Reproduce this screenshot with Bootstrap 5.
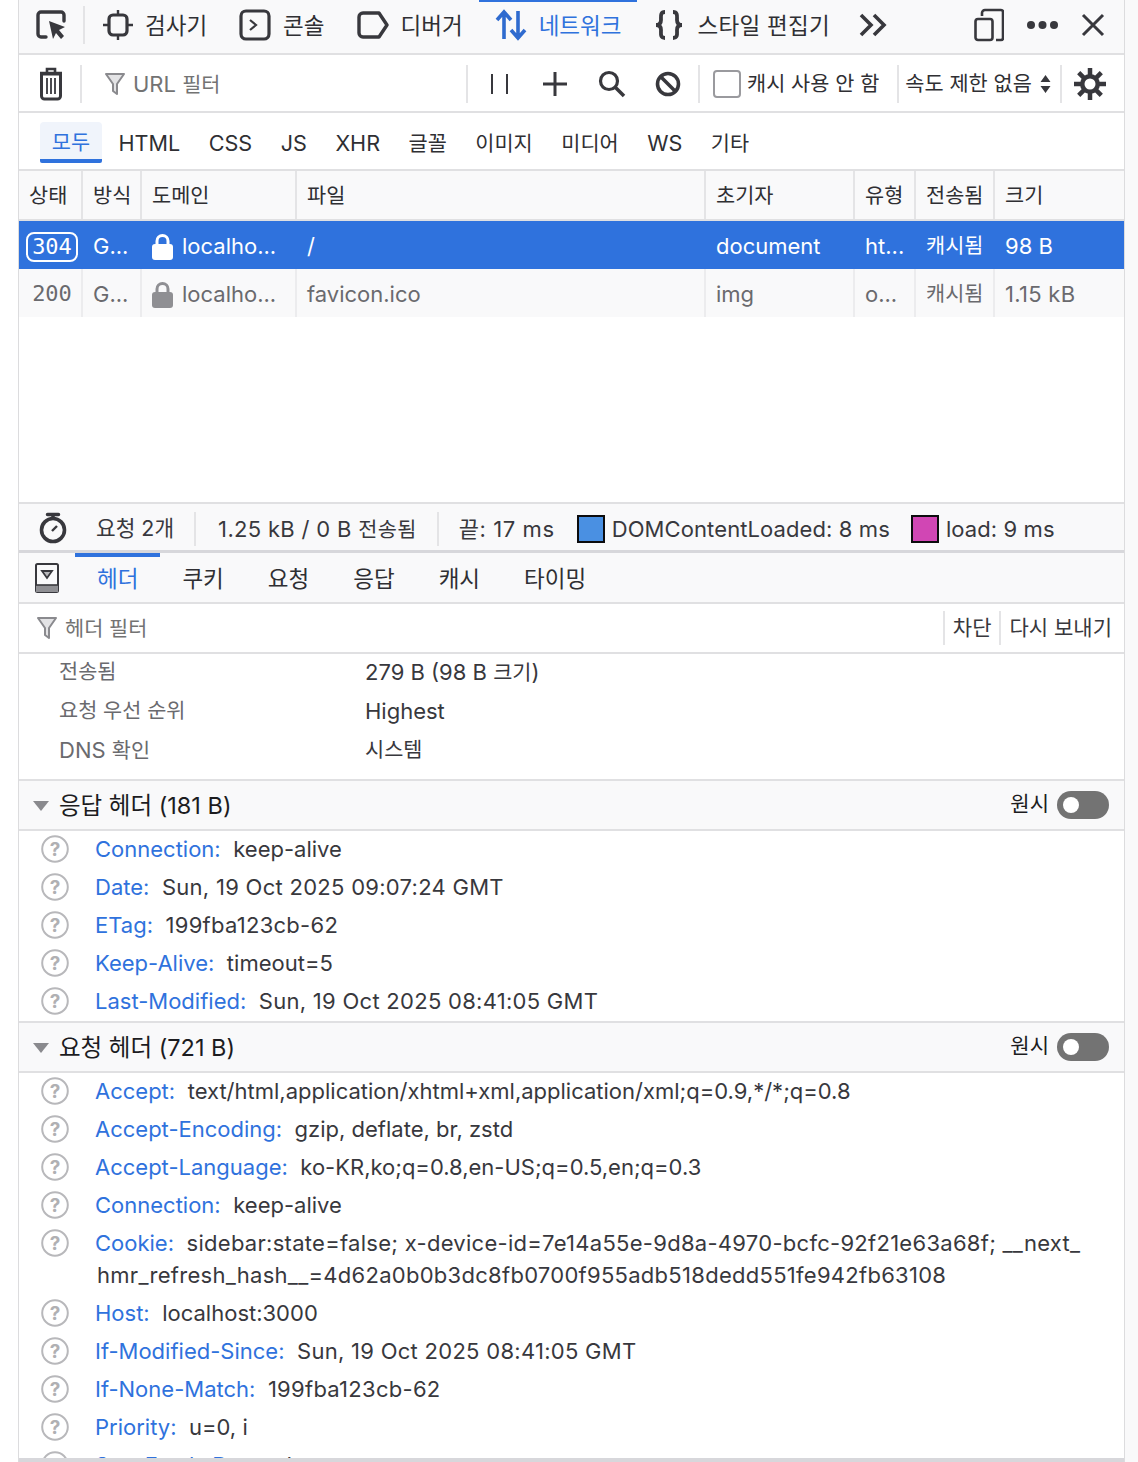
<!DOCTYPE html>
<html lang="ko">
<head>
<meta charset="utf-8">
<title>네트워크</title>
<link href="https://cdn.jsdelivr.net/npm/bootstrap@5.3.0/dist/css/bootstrap.min.css" rel="stylesheet">
<style>
html,body{margin:0;height:1462px;overflow:hidden;background:#f9f9fa}
body{font-family:Inter,"Noto Sans CJK KR","Noto Sans",sans-serif;font-size:22px;line-height:1.2;color:#38383d}
.ko{font-size:20.8px}
.num{letter-spacing:.28px}
.outer-left{position:absolute;left:0;top:0;width:18px;height:1462px;background:#fff}
.frame{position:relative;width:1107px;height:1462px;margin-left:18px;background:#fff;border-left:1px solid #dcdcde;border-right:1px solid #dcdcde;overflow:hidden;display:flex;flex-direction:column}
.bar{flex:none;border-bottom:2px solid #e0e0e2;display:flex;align-items:center}
.tb1{height:55px;background:#f9f9fa;padding-bottom:3px}
.tb2{height:58px;background:#fff;padding-top:2px}
.tb3{height:58px;background:#fff}
svg{display:block;flex:none}
.vsep{width:2px;height:38px;background:#e4e4e6;flex:none}
.pick{margin-left:16px;margin-right:16px}
.tb1 .vsep{margin-right:2px}
.dtab{display:flex;align-items:center;gap:12px;padding:0 16px 3px;height:53px;align-self:flex-start;color:#2f2f33;white-space:nowrap;font-size:22.5px}
.dtab.sel{color:#2f72dd;box-shadow:inset 0 2px 0 #2f72dd}
.wide-label{letter-spacing:.3px}
.more{margin-left:13px}
.tool-right{margin-left:auto;display:flex;align-items:center;gap:22px;margin-right:19px}
.trash{margin-left:19px;margin-right:16px}
.fltr{margin-left:23px;margin-right:8px}
.ph{color:#737373}
.url-fill{width:333px}
.tools{display:flex;align-items:center;margin-left:22px}
.t-plus{margin-left:34px}
.t-search{margin-left:31px}
.t-block{margin-left:29px}
.sep-a{margin-left:17px}
.chk{width:28px;height:28px;border:2px solid #9a9a9e;border-radius:4px;background:#fff;margin:0 6px 0 13px;flex:none}
.tx-sm{white-space:nowrap;color:#2f2f33}
.sep-b{margin-left:18px}
.tx-rate{margin-left:6px}
.arrows{margin-left:8px}
.sep-c{margin-left:9px}
.gear{margin-left:12px}
.ftabs{display:flex;gap:4.5px;margin-left:21px;height:100%;align-items:stretch}
.ftab{display:flex;align-items:center;padding:3px 12px 0;color:#2f2f33;margin-top:9px;height:41px;white-space:nowrap;font-size:21.6px}
.ftab.ko{font-size:20.8px}
.ftab.sel{background:#f0f4fb;color:#2f72dd;border-bottom:4px solid #2f72dd;border-radius:4px 4px 2px 2px;padding:6px 0 0;width:62px;justify-content:center}
.gridhead,.gridrow{display:grid;grid-template-columns:62px 59px 155px 409px 149px 61px 79px 1fr;flex:none}
.gridhead{height:50px;background:#f9f9fa;border-bottom:2px solid #e0e0e2}
.gridrow{height:48px;align-items:stretch}
.cel{display:flex;align-items:center;padding-left:10px;border-left:2px solid #ececee;white-space:nowrap;overflow:hidden;padding-top:3px}
.cel:first-child{border-left:0}
.gridhead .cel{border-left-color:#e4e4e6;color:#2f2f33;padding-top:2px}
.rsel{background:#2f72dd;color:#fff}
.rsel .cel{border-left-color:transparent}
.rdim{background:#f9f9fa;color:#6a6a6e}
.mono{font-family:"DejaVu Sans Mono",monospace;font-size:22px;padding-left:4px;justify-content:center}
.pill{border:2px solid #fff;border-radius:8px;padding:0 4px;line-height:26px;height:30px}
.gap-l{gap:9px}
.empty{height:185px;flex:none}
.status{height:48px;flex:none;background:#f9f9fa;border-top:2px solid #e0e0e2;display:flex;align-items:center;color:#38383d;padding-top:4px}
.status svg.watch{margin-left:19px;margin-right:28px}
.st-count{font-size:21.4px}
.st-xfer{letter-spacing:.32px;margin-left:2px}
.st-fin{letter-spacing:.6px}
.st-dom{letter-spacing:.1px}
.stsep{width:2px;height:34px;background:#e4e4e6;margin:0 20px;flex:none}
.swatch{width:28px;height:28px;border:2px solid #0c0c0d;flex:none;margin-right:7px}
.sw-b{background:#4a90e2;margin-left:22px}
.sw-p{background:#d146b4;margin-left:21px}
.split{height:3px;background:#d7d7db;flex:none}
.dtabs{height:51px;background:#f9f9fa;flex:none}
.dbook{margin-left:16px;margin-right:16px}
.htab{height:49px;padding:2px 22px 0;display:flex;align-items:center;justify-content:center;color:#2f2f33;font-size:22.5px}
.htab.sel{color:#2f72dd;box-shadow:inset 0 4px 0 #2f72dd}
.tb-h{height:50px;background:#fff;flex:none}
.hicon{margin-left:18px;margin-right:8px}
.ph-h{padding-top:2px}
.acts{margin-left:auto;display:flex;align-items:center;margin-right:12px;color:#38383d;font-size:21px}
.acts .vsep{height:34px;margin:0 8px}
.sum{height:127px;flex:none;border-bottom:2px solid #e0e0e2;color:#38383d}
.sumrow{display:flex;height:39px;align-items:center;padding-bottom:3px}
.sumk{width:306px;margin-left:40px;color:#6a6a6e}
.sec{height:50px;flex:none;background:#f9f9fa;border-bottom:2px solid #e0e0e2;display:flex;align-items:center;color:#1c1c1f;font-size:23.5px;padding-top:2px}
.sec.sec2{height:52px;border-top:2px solid #e0e0e2;padding-top:2px}
.tri{margin-left:14px;margin-right:10px}
.raw{margin-left:auto;display:flex;align-items:center;gap:8px;margin-right:15px;font-size:21px;padding-bottom:2px}
.raw span{padding-bottom:3px}
.switcher{width:52px;height:28px;border-radius:14px;background:#737373;display:flex;align-items:center;padding-left:6px}
.switcher i{display:block;width:16px;height:16px;border-radius:50%;background:#fff}
.hrow{min-height:38px;display:flex;align-items:flex-start;flex:none}
.hrow svg{margin:4px 26px 0 22px}
.hline{line-height:31px;padding-top:3px;white-space:nowrap;width:990px}
.hk{color:#2f72dd;margin-right:12.5px}
.hv{color:#38383d}
.hrow.wrapd{min-height:70px}
.wrapd .hline{line-height:32px;padding-top:2px}
.wrapd .hv2{margin-left:2px}
.base{position:absolute;left:0;right:0;bottom:0;height:4px;background:#d7d7db}
</style>
</head>
<body>
<div class="outer-left"></div>
<main class="frame">
  <!-- devtools tabs -->
  <div class="bar tb1">
    <svg class="pick" width="32" height="32" viewBox="0 0 32 32"><path d="M11 28H6a3 3 0 0 1-3-3V6a3 3 0 0 1 3-3h20a3 3 0 0 1 3 3v6" fill="none" stroke="#38383d" stroke-width="3.4" stroke-linecap="round"/><path d="M14 12l16 6-6 3 5 6-3 3-5-6-3 6z" fill="#38383d"/></svg>
    <div class="vsep"></div>
    <div class="dtab"><svg width="30" height="32" viewBox="0 0 30 32"><rect x="6" y="6" width="18" height="20" rx="4" fill="none" stroke="#38383d" stroke-width="3.2"/><path d="M15 1v5M15 26v5M0 16h6M24 16h6" stroke="#38383d" stroke-width="2.4"/></svg><span>검사기</span></div>
    <div class="dtab"><svg width="32" height="32" viewBox="0 0 32 32"><rect x="2" y="2" width="28" height="28" rx="5" fill="none" stroke="#38383d" stroke-width="3.2"/><path d="M11 11l6 5-6 5" fill="none" stroke="#38383d" stroke-width="2.2"/></svg><span>콘솔</span></div>
    <div class="dtab"><svg width="32" height="28" viewBox="0 0 32 28"><path d="M6 2h16l8 12-8 12H6a4 4 0 0 1-4-4V6a4 4 0 0 1 4-4z" fill="none" stroke="#38383d" stroke-width="3.4" stroke-linejoin="round"/></svg><span>디버거</span></div>
    <div class="dtab sel"><svg width="32" height="32" viewBox="0 0 32 32"><path d="M9 30V4M2 11l7-8 7 8M23 2v26M16 21l7 8 7-8" fill="none" stroke="#2f6bcf" stroke-width="3.6"/></svg><span>네트워크</span></div>
    <div class="dtab"><svg width="32" height="30" viewBox="0 0 32 30"><path d="M12 2C7 2 8 6 8 10c0 3-1 5-5 5 4 0 5 2 5 5 0 4-1 8 4 8M20 2c5 0 4 4 4 8 0 3 1 5 5 5-4 0-5 2-5 5 0 4 1 8-4 8" fill="none" stroke="#38383d" stroke-width="3.8"/></svg><span class="wide-label">스타일 편집기</span></div>
    <svg class="more" width="28" height="24" viewBox="0 0 28 24"><path d="M2 2l10 10L2 22M15 2l10 10-10 10" fill="none" stroke="#38383d" stroke-width="3.6"/></svg>
    <div class="tool-right">
      <svg width="30" height="34" viewBox="0 0 30 34"><path d="M8 8V5a3 3 0 0 1 3-3h16a2 2 0 0 1 2 2v26a2 2 0 0 1-2 2h-5" fill="none" stroke="#38383d" stroke-width="2.6"/><rect x="1.5" y="11" width="17" height="21" rx="2.5" fill="none" stroke="#38383d" stroke-width="2.6"/></svg>
      <svg width="33" height="10" viewBox="0 0 33 10"><circle cx="5" cy="5" r="4" fill="#38383d"/><circle cx="16.500" cy="5" r="4" fill="#38383d"/><circle cx="28" cy="5" r="4" fill="#38383d"/></svg>
      <svg width="24" height="24" viewBox="0 0 24 24"><path d="M2 2l20 20M22 2L2 22" stroke="#38383d" stroke-width="3"/></svg>
    </div>
  </div>
  <!-- network toolbar -->
  <div class="bar tb2">
    <svg class="trash" width="26" height="34" viewBox="0 0 26 34"><path d="M2 6h22M9 5V2h8v3" fill="none" stroke="#38383d" stroke-width="2.6"/><path d="M3.500 7h19v22a3 3 0 0 1-3 3h-13a3 3 0 0 1-3-3z" fill="none" stroke="#38383d" stroke-width="3"/><path d="M9 11v16M13 11v16M17 11v16" stroke="#38383d" stroke-width="1.8"/></svg>
    <div class="vsep"></div>
    <svg class="fltr" width="20" height="24" viewBox="0 0 20 24"><path d="M1 2h18l-7 10v10l-4-3v-7z" fill="#e3e3e5" stroke="#8a8a8e" stroke-width="2" stroke-linejoin="round"/></svg>
    <span class="ph url-fill text-nowrap">URL <span class="ko">필터</span></span>
    <div class="vsep"></div>
    <div class="tools">
      <svg width="19" height="20" viewBox="0 0 19 20"><path d="M2 0v20M17 0v20" stroke="#38383d" stroke-width="2"/></svg>
      <svg class="t-plus" width="24" height="24" viewBox="0 0 24 24"><path d="M12 0v24M0 12h24" stroke="#38383d" stroke-width="3"/></svg>
      <svg class="t-search" width="28" height="28" viewBox="0 0 28 28"><circle cx="11" cy="11" r="8.500" fill="none" stroke="#38383d" stroke-width="3.2"/><path d="M17 17l9 9" stroke="#38383d" stroke-width="3.600"/></svg>
      <svg class="t-block" width="26" height="26" viewBox="0 0 26 26"><circle cx="13" cy="13" r="10.500" fill="none" stroke="#38383d" stroke-width="3.600"/><path d="M5.500 5.500l15 15" stroke="#38383d" stroke-width="3.600"/></svg>
    </div>
    <div class="vsep sep-a"></div>
    <div class="chk"></div>
    <span class="tx-sm ko">캐시 사용 안 함</span>
    <div class="vsep sep-b"></div>
    <span class="tx-sm ko tx-rate">속도 제한 없음</span>
    <svg class="arrows" width="11" height="20" viewBox="0 0 11 20"><path d="M5.500 1l5 7H.5zM5.500 19l5-7H.5z" fill="#38383d"/></svg>
    <div class="vsep sep-c"></div>
    <svg class="gear" width="32" height="32" viewBox="0 0 32 32"><g stroke="#38383d" stroke-width="4.500"><path d="M16 0v32M0 16h32M4.700 4.700l22.600 22.600M27.300 4.700L4.700 27.300"/></g><circle cx="16" cy="16" r="10" fill="#38383d"/><circle cx="16" cy="16" r="5.500" fill="#fff"/></svg>
  </div>
  <!-- type filter -->
  <div class="bar tb3">
    <div class="ftabs">
      <div class="ftab sel ko">모두</div><div class="ftab">HTML</div><div class="ftab">CSS</div><div class="ftab">JS</div><div class="ftab">XHR</div><div class="ftab ko">글꼴</div><div class="ftab ko">이미지</div><div class="ftab ko">미디어</div><div class="ftab">WS</div><div class="ftab ko">기타</div>
    </div>
  </div>
  <!-- requests -->
  <div class="gridhead ko">
    <div class="cel">상태</div><div class="cel">방식</div><div class="cel">도메인</div><div class="cel">파일</div><div class="cel">초기자</div><div class="cel">유형</div><div class="cel">전송됨</div><div class="cel">크기</div>
  </div>
  <div class="gridrow rsel">
    <div class="cel mono"><span class="pill">304</span></div><div class="cel">G...</div><div class="cel gap-l"><svg width="21" height="26" viewBox="0 0 21 26"><path d="M5 12V7a5.500 5.500 0 0 1 11 0v5" fill="none" stroke="#fff" stroke-width="3"/><rect y="10" width="21" height="16" rx="3" fill="#fff"/></svg>localho...</div><div class="cel">/</div><div class="cel">document</div><div class="cel">ht...</div><div class="cel ko">캐시됨</div><div class="cel">98 B</div>
  </div>
  <div class="gridrow rdim">
    <div class="cel mono">200</div><div class="cel">G...</div><div class="cel gap-l"><svg width="21" height="26" viewBox="0 0 21 26"><path d="M5 12V7a5.500 5.500 0 0 1 11 0v5" fill="none" stroke="#8f8f93" stroke-width="3"/><rect y="10" width="21" height="16" rx="3" fill="#8f8f93"/></svg>localho...</div><div class="cel">favicon.ico</div><div class="cel">img</div><div class="cel">o...</div><div class="cel ko">캐시됨</div><div class="cel num">1.15 kB</div>
  </div>
  <div class="empty"></div>
  <!-- summary -->
  <div class="status">
    <svg class="watch" width="30" height="34" viewBox="0 0 30 34"><path d="M9.500 2.500h11M15 3v3" stroke="#38383d" stroke-width="3.500" stroke-linecap="round"/><circle cx="15" cy="18" r="11.500" fill="none" stroke="#38383d" stroke-width="3.600"/><path d="M14 19l5-5" stroke="#38383d" stroke-width="2.400"/></svg>
    <span class="st-count">요청 2개</span><div class="stsep"></div><span class="st-xfer">1.25 kB / 0 B <span class="ko">전송됨</span></span><div class="stsep"></div><span class="st-fin">끝: 17 ms</span>
    <div class="swatch sw-b"></div><span class="st-dom">DOMContentLoaded: 8 ms</span>
    <div class="swatch sw-p"></div><span class="st-dom">load: 9 ms</span>
  </div>
  <div class="split"></div>
  <!-- detail tabs -->
  <div class="bar dtabs">
    <svg class="dbook" width="24" height="30" viewBox="0 0 24 30"><rect x="1" y="1" width="22" height="28" rx="1.500" fill="none" stroke="#38383d" stroke-width="2"/><rect x="1" y="22" width="22" height="7" fill="#8f8f93"/><path d="M1 22h22" stroke="#38383d" stroke-width="1.600"/><path d="M7 8h10l-5 7z" fill="#b8b8bb" stroke="#38383d" stroke-width="1.800"/></svg>
    <div class="htab sel">헤더</div><div class="htab">쿠키</div><div class="htab">요청</div><div class="htab">응답</div><div class="htab">캐시</div><div class="htab">타이밍</div>
  </div>
  <div class="bar tb-h">
    <svg class="hicon" width="20" height="24" viewBox="0 0 20 24"><path d="M1 2h18l-7 10v10l-4-3v-7z" fill="#e3e3e5" stroke="#8a8a8e" stroke-width="2" stroke-linejoin="round"/></svg>
    <span class="ph ko ph-h">헤더 필터</span>
    <div class="acts"><div class="vsep"></div><span>차단</span><div class="vsep"></div><span>다시 보내기</span></div>
  </div>
  <div class="sum">
    <div class="sumrow"><span class="sumk ko">전송됨</span><span>279 B (98 B <span class="ko">크기</span>)</span></div>
    <div class="sumrow"><span class="sumk ko">요청 우선 순위</span><span>Highest</span></div>
    <div class="sumrow"><span class="sumk">DNS <span class="ko">확인</span></span><span class="ko">시스템</span></div>
  </div>
  <div class="sec"><svg class="tri" width="16" height="10" viewBox="0 0 16 10"><path d="M0 0h16L8 10z" fill="#8a8a8e"/></svg><span>응답 헤더 (181 B)</span><div class="raw"><span>원시</span><div class="switcher"><i></i></div></div></div>
  <div class="hrow"><svg width="28" height="28" viewBox="0 0 28 28"><use href="#q"/></svg><div class="hline"><span class="hk">Connection:</span><span class="hv">keep-alive</span></div></div>
  <div class="hrow"><svg width="28" height="28" viewBox="0 0 28 28"><use href="#q"/></svg><div class="hline"><span class="hk">Date:</span><span class="hv num">Sun, 19 Oct 2025 09:07:24 GMT</span></div></div>
  <div class="hrow"><svg width="28" height="28" viewBox="0 0 28 28"><use href="#q"/></svg><div class="hline"><span class="hk">ETag:</span><span class="hv num">199fba123cb-62</span></div></div>
  <div class="hrow"><svg width="28" height="28" viewBox="0 0 28 28"><use href="#q"/></svg><div class="hline"><span class="hk">Keep-Alive:</span><span class="hv">timeout=5</span></div></div>
  <div class="hrow"><svg width="28" height="28" viewBox="0 0 28 28"><use href="#q"/></svg><div class="hline"><span class="hk">Last-Modified:</span><span class="hv num">Sun, 19 Oct 2025 08:41:05 GMT</span></div></div>
  <div class="sec sec2"><svg class="tri" width="16" height="10" viewBox="0 0 16 10"><path d="M0 0h16L8 10z" fill="#8a8a8e"/></svg><span>요청 헤더 (721 B)</span><div class="raw"><span>원시</span><div class="switcher"><i></i></div></div></div>
  <div class="hrow"><svg width="28" height="28" viewBox="0 0 28 28"><use href="#q"/></svg><div class="hline"><span class="hk">Accept:</span><span class="hv">text/html,application/xhtml+xml,application/xml;q=0.9,*/*;q=0.8</span></div></div>
  <div class="hrow"><svg width="28" height="28" viewBox="0 0 28 28"><use href="#q"/></svg><div class="hline"><span class="hk">Accept-Encoding:</span><span class="hv">gzip, deflate, br, zstd</span></div></div>
  <div class="hrow"><svg width="28" height="28" viewBox="0 0 28 28"><use href="#q"/></svg><div class="hline"><span class="hk">Accept-Language:</span><span class="hv">ko-KR,ko;q=0.8,en-US;q=0.5,en;q=0.3</span></div></div>
  <div class="hrow"><svg width="28" height="28" viewBox="0 0 28 28"><use href="#q"/></svg><div class="hline"><span class="hk">Connection:</span><span class="hv">keep-alive</span></div></div>
  <div class="hrow wrapd"><svg width="28" height="28" viewBox="0 0 28 28"><use href="#q"/></svg><div class="hline"><span class="hk">Cookie:</span><span class="hv num">sidebar:state=false; x-device-id=7e14a55e-9d8a-4970-bcfc-92f21e63a68f; __next_</span><br><span class="hv hv2 num">hmr_refresh_hash__=4d62a0b0b3dc8fb0700f955adb518dedd551fe942fb63108</span></div></div>
  <div class="hrow"><svg width="28" height="28" viewBox="0 0 28 28"><use href="#q"/></svg><div class="hline"><span class="hk">Host:</span><span class="hv">localhost:3000</span></div></div>
  <div class="hrow"><svg width="28" height="28" viewBox="0 0 28 28"><use href="#q"/></svg><div class="hline"><span class="hk">If-Modified-Since:</span><span class="hv num">Sun, 19 Oct 2025 08:41:05 GMT</span></div></div>
  <div class="hrow"><svg width="28" height="28" viewBox="0 0 28 28"><use href="#q"/></svg><div class="hline"><span class="hk">If-None-Match:</span><span class="hv num">199fba123cb-62</span></div></div>
  <div class="hrow"><svg width="28" height="28" viewBox="0 0 28 28"><use href="#q"/></svg><div class="hline"><span class="hk">Priority:</span><span class="hv">u=0, i</span></div></div>
  <div class="hrow"><svg width="28" height="28" viewBox="0 0 28 28"><use href="#q"/></svg><div class="hline"><span class="hk">Sec-Fetch-Dest:</span><span class="hv">document</span></div></div>
  <div class="base"></div>
</main>
<svg width="0" height="0" class="d-none"><defs><g id="q"><circle cx="14" cy="14" r="12.800" fill="#fff" stroke="#b8b8bb" stroke-width="2"/><text x="14" y="20.500" text-anchor="middle" font-size="19" font-weight="700" fill="#b0b0b3" font-family="Inter,sans-serif">?</text></g></defs></svg>
<script src="https://cdn.jsdelivr.net/npm/bootstrap@5.3.0/dist/js/bootstrap.bundle.min.js"></script>
</body>
</html>
